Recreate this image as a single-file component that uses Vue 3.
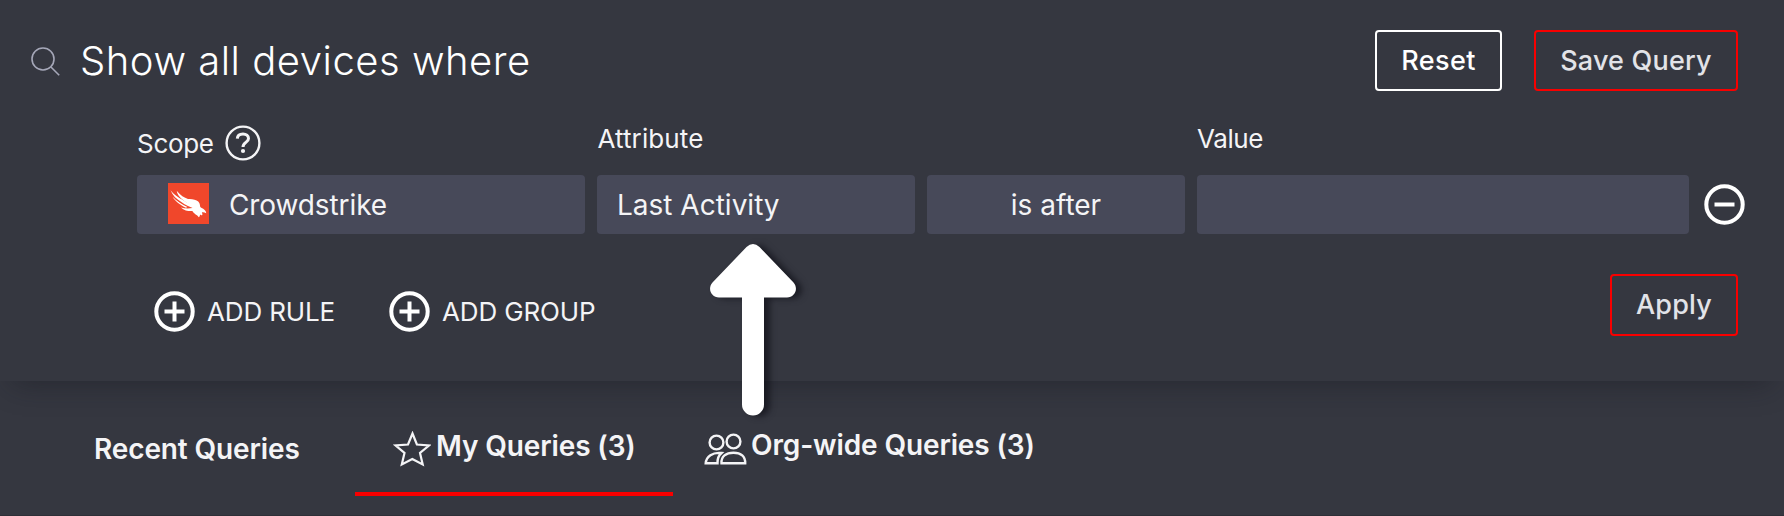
<script setup>
const tabs = [
  { id: 'recent', label: 'Recent Queries' },
  { id: 'mine', label: 'My Queries (3)' },
  { id: 'org', label: 'Org-wide Queries (3)' },
]
</script>

<template>
  <div class="page">
    <section class="builder">
      <header class="top">
        <svg class="search" viewBox="0 0 30 30"><circle cx="12" cy="12" r="11" /><path d="M19.700 19.700 28.200 28.200" /></svg>
        <h1><span>Show all devices where</span></h1>
        <button class="btn reset"><span>Reset</span></button>
        <button class="btn save"><span>Save Query</span></button>
      </header>

      <div class="rule">
        <div class="label scope">
          <span>Scope</span>
          <svg viewBox="0 0 36 36"><circle cx="18" cy="18" r="16.400" /><path class="mark" d="M12.3 13.6C12.5 10.4 15 8.9 18 8.9C21.200 8.9 23.500 10.700 23.500 13.400C23.500 17.600 18 17.300 18 22" /><circle class="dot" cx="18" cy="26" r="2.100" /></svg>
        </div>
        <div class="label attribute"><span>Attribute</span></div>
        <div class="label value"><span>Value</span></div>
        <div class="field f1">
          <svg class="logo" viewBox="0 0 40 40">
            <rect width="40" height="40" fill="#f0472b" />
            <path fill="#fff" d="M2.500 7C6 12 12 15 18.500 19C22 20.500 25 22.500 26 24.500C22 24 17 21.500 13 18.500C8 15.500 4.500 12 2.500 7Z" />
            <path fill="#fff" d="M4.500 13.500C8 17.500 14 21 19 23.500L17.500 24.200C12 21.500 7 18 4.500 13.500Z" />
            <path fill="#fff" d="M8.500 7.500C12 12 16 14.300 19.500 15.600C23 15.200 27.500 16.200 29.500 18C31.500 20 31 21.800 31.500 23.300C34 25 37 26 37.300 29.500C35.500 28.500 34 28.300 33 28.700C34.500 31 33 32.400 31.300 30.800C31 32 31 33 30 33.500C29.500 31.500 25.500 30.500 23.800 27.300C20 27.500 16 27 12.500 23.800C16 25 19.500 25.200 24 24.500C22 21 17 18.500 14 16C11 13.500 9 11 8.500 7.500Z" />
          </svg>
          <span>Crowdstrike</span>
        </div>
        <div class="field f2"><span>Last Activity</span></div>
        <div class="field f3"><span>is after</span></div>
        <div class="field f4"></div>
        <svg class="round minus" viewBox="0 0 41 41"><circle cx="20.500" cy="20.500" r="18.200" /><path d="M10.500 20.500H30.500" /></svg>
      </div>

      <footer class="actions">
        <button class="add rule-add">
          <svg class="round" viewBox="0 0 41 41"><circle cx="20.500" cy="20.500" r="18.200" /><path d="M10.500 20.500H30.500M20.500 10.500V30.500" /></svg>
          <span>ADD RULE</span>
        </button>
        <button class="add group-add">
          <svg class="round" viewBox="0 0 41 41"><circle cx="20.500" cy="20.500" r="18.200" /><path d="M10.500 20.500H30.500M20.500 10.500V30.500" /></svg>
          <span>ADD GROUP</span>
        </button>
        <button class="btn apply"><span>Apply</span></button>
      </footer>
    </section>

    <nav class="tabs">
      <div v-for="tab in tabs" :key="tab.id" class="tab" :class="tab.id">
        <svg v-if="tab.id === 'mine'" class="star" viewBox="0 0 38 36"><path d="M19.500 2.500 23.900 13.500 36 14.500 27 22 29.700 33.500 19.300 28 8.800 33.500 11.500 22 2.700 14.500 15 13.500Z" /></svg>
        <svg v-if="tab.id === 'org'" class="people" viewBox="0 0 42 32">
          <circle cx="12.500" cy="9.500" r="6.900" /><circle cx="29.500" cy="8.500" r="6.900" />
          <path d="M17.500 20C8.500 19 2.200 23.500 1.700 30.300H13.500C13.300 25.500 14.500 22.500 17.500 20Z" />
          <path d="M17.500 30.300C17 23.500 22 19.700 29.500 19.700S41.400 23.500 41.200 30.300Z" />
        </svg>
        <span>{{ tab.label }}</span>
      </div>
    </nav>

    <svg class="pointer" viewBox="0 0 86 172">
      <path d="M36.500 3Q43 -3 49.500 3L83.500 38.500C89 45 84.500 53.500 77 53.500H54V160.500A11 11 0 0 1 32 160.500V53.500H9C1.500 53.500 -3 45 2.500 38.500Z" />
    </svg>
  </div>
</template>

<style>
body { background: #353740; }
</style>

<style scoped>
.page {
  position: relative;
  width: 1784px;
  height: 516px;
  overflow: hidden;
  box-sizing: border-box;
  background: #353740;
  border-bottom: 1px solid #2e2f37;
  font-family: Inter, "Liberation Sans", sans-serif;
  color: #f4f4f6;
}
* { box-sizing: border-box; }
span { white-space: nowrap; }
svg { display: block; flex: none; fill: none; stroke: #f4f4f6; }
.builder {
  height: 381px;
  position: relative;
  background: #353740;
  box-shadow: 0 14px 28px -12px rgba(20, 22, 28, 0.45);
}
.top { display: flex; align-items: flex-start; padding: 30px 46px 0 31px; height: 125px; }
.search { width: 30px; height: 30px; margin-top: 17px; stroke: #a5a7b8; stroke-width: 1.600; }
h1 { margin: 6px 0 0 19px; font-size: 40px; line-height: 50px; font-weight: 300; letter-spacing: 0.520px; flex: 1; color: #fff; }
.btn {
  height: 61px;
  padding: 0;
  background: none;
  border: 2px solid #f80000;
  border-radius: 4px;
  font: 500 27px/56px Inter, "Liberation Sans", sans-serif;
  letter-spacing: 0.200px;
  color: #e2e3e8;
  text-align: center;
}
.reset { width: 127px; border-color: #fff; color: #fff; letter-spacing: 0.400px; }
.save { width: 204px; margin-left: 32px; }
.rule {
  display: grid;
  grid-template-columns: 448px 318px 258px 492px 41px;
  grid-template-rows: 50px 59px;
  column-gap: 12px;
  padding-left: 137px;
  align-items: center;
}
.label { font-size: 26px; line-height: 32px; align-self: start; }
.label span { display: inline-block; }
.scope { display: flex; letter-spacing: -0.300px; }
.scope span { padding-top: 3px; }
.scope svg { width: 36px; height: 36px; margin-left: 11px; stroke-width: 2.400; }
.scope .mark { stroke-width: 3; }
.scope .dot { fill: #f4f4f6; stroke: none; }
.attribute { margin-top: -2px; padding-left: 0.500px; letter-spacing: 0.100px; }
.value { grid-column: 4 / 6; margin-top: -2px; letter-spacing: -0.400px; }
.field { height: 59px; border-radius: 4px; background: #474959; display: flex; align-items: center; font-size: 28px; }
.f1 { padding-left: 31px; letter-spacing: -0.100px; }
.logo { width: 41px; height: 41px; margin: -3px 20px 0 0; stroke: none; }
.f2 { padding-left: 20px; }
.f3 { justify-content: center; }
.round { width: 41px; height: 41px; stroke: #fff; stroke-width: 4; }
.minus { margin-left: 3px; }
.actions { display: flex; align-items: flex-start; padding: 40px 46px 0 154px; }
.add { display: flex; align-items: center; gap: 12px; padding: 0; margin-top: 17px; border: 0; background: none; color: #f4f4f6; font: 400 26px/41px Inter, "Liberation Sans", sans-serif; letter-spacing: -0.150px; }
.rule-add { width: 235px; }
.apply { width: 128px; height: 62px; margin-left: auto; }
.tabs { display: flex; height: 134px; position: relative; font-size: 28px; font-weight: 600; line-height: 34px; letter-spacing: -0.120px; }
.tab { display: flex; }
.recent { margin-left: 94px; width: 261px; padding-top: 51px; }
.mine { width: 318px; height: 115px; border-bottom: 4px solid #f80000; padding: 48px 0 0 38px; }
.org { padding: 47px 0 0 31px; }
.star { width: 38px; height: 36px; margin: 2px 5px 0 0; stroke-width: 2.200; }
.people { width: 42px; height: 32px; margin: 5px 5px 0 0; stroke-width: 2.400; overflow: visible; }
.pointer { position: absolute; left: 710px; top: 244px; width: 86px; height: 172px; overflow: visible; stroke: none; fill: #fff; filter: drop-shadow(6px 1px 3px rgba(12, 12, 20, 0.65)); }
</style>
